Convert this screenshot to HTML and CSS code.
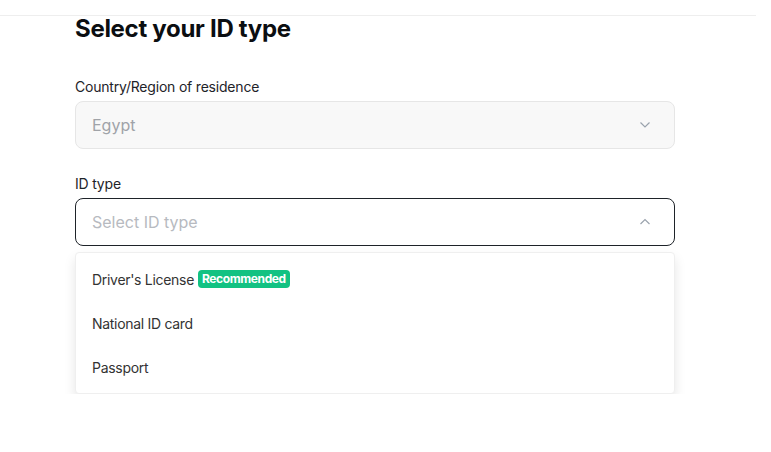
FILE: index.html
```html
<!DOCTYPE html>
<html>
<head>
<meta charset="utf-8">
<link rel="stylesheet" href="styles.css">
</head>
<body>
<div class="topbar"></div>
<main class="content">
  <h1 class="title">Select your ID type</h1>
  <div class="field">
    <label class="label">Country/Region of residence</label>
    <div class="select disabled">
      <span class="value">Egypt</span>
      <svg class="chev" width="12" height="8" viewBox="0 0 12 8"><path d="M1.5 1.5 L6 6 L10.5 1.5" fill="none" stroke="#9aa3ad" stroke-width="1.2"/></svg>
    </div>
  </div>
  <div class="field second">
    <label class="label">ID type</label>
    <div class="select open">
      <span class="placeholder">Select ID type</span>
      <svg class="chev" width="12" height="8" viewBox="0 0 12 8"><path d="M1.5 6 L6 1.5 L10.5 6" fill="none" stroke="#9aa3ad" stroke-width="1.2"/></svg>
    </div>
    <div class="menu">
      <div class="item">Driver's License <span class="badge">Recommended</span></div>
      <div class="item">National ID card</div>
      <div class="item">Passport</div>
    </div>
  </div>
</main>
</body>
</html>
```
FILE: styles.css
```css
* { box-sizing: border-box; }
html, body { margin: 0; padding: 0; background: #fff; }
body { font-family: Inter, "Noto Sans", sans-serif; color: #1e2329; width: 756px; }
.topbar { height: 16px; border-bottom: 1px solid #eeeeee; }
.content { padding-left: 75px; width: 675px; }
.title { margin: 0; font-size: 24px; font-weight: 700; line-height: 26px; letter-spacing: -0.3px; color: #0b0e11; }
.field { margin-top: 36px; }
.field.second { margin-top: 26px; }
.label { display: block; font-size: 14px; line-height: 18px; color: #1e2329; margin-bottom: 5px; letter-spacing: -0.2px; }
.select { height: 48px; border-radius: 8px; display: flex; align-items: center; justify-content: space-between; padding: 0 23px 0 16px; font-size: 16px; }
.select.disabled { background: #f8f8f8; border: 1px solid #e6e6e6; }
.select.open { background: #fff; border: 1px solid #1e2329; }
.value { color: #a0a3a8; }
.placeholder { color: #b7bac0; }
.chev { display: block; }
.menu { margin-top: 6px; background: #fff; border-radius: 4px; box-shadow: 0 6px 12px rgba(0,0,0,0.10); border: 1px solid #efefef; padding: 4px 0; }
.item { height: 44px; display: flex; align-items: center; padding: 0 16px; font-size: 14px; color: #333; gap: 4px; letter-spacing: -0.3px; }
.badge { background: #12c282; color: #fff; font-size: 12px; font-weight: 700; line-height: 18px; padding: 0 4px; border-radius: 4px; letter-spacing: -0.4px; }
```
